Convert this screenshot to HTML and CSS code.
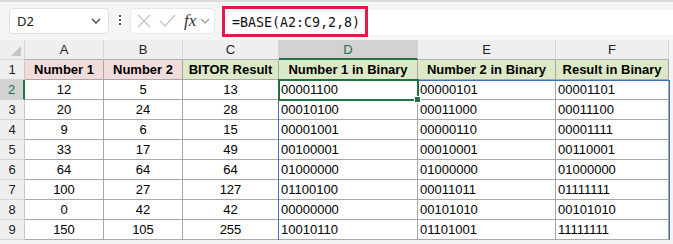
FILE: index.html
```html
<!DOCTYPE html>
<html lang="en">
<head>
    <meta charset="UTF-8">
    <title>BASE - BITOR</title>
    <link rel="stylesheet" href="styles.css">
</head>
<body>

<!-- Barra de fórmulas -->
<div class="toolbar">
    <div class="namebox">
        <span>D2</span>
        <svg class="chev" width="10" height="6" viewBox="0 0 10 6"><path d="M1 1l4 4 4-4" fill="none" stroke="#444" stroke-width="1.3"/></svg>
    </div>
    <div class="dots"><i></i><i></i><i></i></div>
    <div class="fxbox">
        <svg width="14" height="14" viewBox="0 0 14 14"><path d="M1 1l12 12M13 1L1 13" stroke="#c4c4c4" stroke-width="1.3"/></svg>
        <svg width="17" height="14" viewBox="0 0 17 14"><path d="M1 7l5 5L16 1" fill="none" stroke="#c4c4c4" stroke-width="1.3"/></svg>
        <span class="fx">fx</span>
        <svg width="10" height="6" viewBox="0 0 10 6"><path d="M1 1l4 4 4-4" fill="none" stroke="#999" stroke-width="1.2"/></svg>
    </div>
    <div class="formula">
        <span class="highlight"></span>
        <span class="ftext">=BASE(A2:C9,2,8)</span>
    </div>
</div>

<!-- Hoja -->
<div class="sheet">
    <div class="corner"><span class="tri"></span></div>
    <div class="colhead">A</div>
    <div class="colhead">B</div>
    <div class="colhead">C</div>
    <div class="colhead active">D</div>
    <div class="colhead">E</div>
    <div class="colhead">F</div>

    <div class="rowhead">1</div>
    <div class="cell head pink">Number 1</div>
    <div class="cell head pink">Number 2</div>
    <div class="cell head green">BITOR Result</div>
    <div class="cell head green">Number 1 in Binary</div>
    <div class="cell head green">Number 2 in Binary</div>
    <div class="cell head green">Result in Binary</div>

    <div class="rowhead active">2</div>
    <div class="cell num">12</div><div class="cell num">5</div><div class="cell num">13</div>
    <div class="cell bin">00001100</div><div class="cell bin">00000101</div><div class="cell bin">00001101</div>

    <div class="rowhead">3</div>
    <div class="cell num">20</div><div class="cell num">24</div><div class="cell num">28</div>
    <div class="cell bin">00010100</div><div class="cell bin">00011000</div><div class="cell bin">00011100</div>

    <div class="rowhead">4</div>
    <div class="cell num">9</div><div class="cell num">6</div><div class="cell num">15</div>
    <div class="cell bin">00001001</div><div class="cell bin">00000110</div><div class="cell bin">00001111</div>

    <div class="rowhead">5</div>
    <div class="cell num">33</div><div class="cell num">17</div><div class="cell num">49</div>
    <div class="cell bin">00100001</div><div class="cell bin">00010001</div><div class="cell bin">00110001</div>

    <div class="rowhead">6</div>
    <div class="cell num">64</div><div class="cell num">64</div><div class="cell num">64</div>
    <div class="cell bin">01000000</div><div class="cell bin">01000000</div><div class="cell bin">01000000</div>

    <div class="rowhead">7</div>
    <div class="cell num">100</div><div class="cell num">27</div><div class="cell num">127</div>
    <div class="cell bin">01100100</div><div class="cell bin">00011011</div><div class="cell bin">01111111</div>

    <div class="rowhead">8</div>
    <div class="cell num">0</div><div class="cell num">42</div><div class="cell num">42</div>
    <div class="cell bin">00000000</div><div class="cell bin">00101010</div><div class="cell bin">00101010</div>

    <div class="rowhead">9</div>
    <div class="cell num">150</div><div class="cell num">105</div><div class="cell num">255</div>
    <div class="cell bin">10010110</div><div class="cell bin">01101001</div><div class="cell bin">11111111</div>

    <!-- rango desbordado y celda activa -->
    <div class="spill"></div>
    <div class="selected"><span class="handle"></span></div>
</div>

</body>
</html>
```

FILE: styles.css
```css
body {
    margin: 0;
    background: #f3f3f3;
    font-family: 'Liberation Sans', Arial, sans-serif;
    overflow: hidden;
}

/* Barra de fórmulas */
.toolbar {
    height: 40px;
    border-top: 2px solid #dcdcdc;
    box-sizing: border-box;
    display: flex;
    align-items: flex-start;
    padding-top: 6px;
    background: #f5f5f5;
}

.namebox {
    margin-left: 9px;
    width: 100px;
    height: 26px;
    box-sizing: border-box;
    background: #fff;
    border: 1px solid #e0e0e0;
    border-radius: 4px;
    display: flex;
    align-items: center;
    justify-content: space-between;
    padding: 0 7px 0 7px;
    font-family: 'Noto Sans', sans-serif;
    font-size: 13px;
    color: #222;
}

.dots {
    width: 21px;
    display: flex;
    flex-direction: column;
    align-items: center;
    gap: 2px;
    padding-top: 7px;
}

.dots i {
    width: 2px;
    height: 2px;
    background: #555;
}

.fxbox {
    width: 85px;
    height: 26px;
    box-sizing: border-box;
    background: #fff;
    border: 1px solid #e6e6e6;
    border-radius: 4px;
    display: flex;
    align-items: center;
    padding-left: 6px;
    gap: 8px;
}

.fx {
    font-family: 'Liberation Serif', serif;
    font-style: italic;
    font-size: 17px;
    color: #333;
    margin-right: -4px;
}

.formula {
    position: relative;
    flex: 1;
    margin-left: 7px;
    height: 25px;
    margin-top: 2px;
    background: #fff;
    display: flex;
    align-items: center;
    padding-left: 10px;
    font-family: 'DejaVu Sans Mono', monospace;
    font-size: 13.3px;
    color: #111;
}

.highlight {
    position: absolute;
    left: 0;
    top: -4px;
    width: 146px;
    height: 31px;
    box-sizing: border-box;
    border: 3px solid #e3194c;
}

/* Hoja */
.sheet {
    position: relative;
    display: grid;
    grid-template-columns: 25px 79px 79px 96px 139px 138px 113px;
    grid-auto-rows: 20px;
    font-size: 13px;
    color: #000;
}

.corner, .colhead, .rowhead {
    background: #efefef;
    box-sizing: border-box;
    color: #222;
    display: flex;
    align-items: center;
    justify-content: center;
    font-size: 13px;
}

.corner {
    position: relative;
    border-right: 1px solid #d6d6d6;
    border-bottom: 1px solid #d6d6d6;
}

.tri {
    position: absolute;
    right: 3px;
    bottom: 3px;
    width: 0;
    height: 0;
    border-left: 10px solid transparent;
    border-bottom: 10px solid #c6c6c6;
}

.colhead {
    border-right: 1px solid #d6d6d6;
    border-bottom: 1px solid #b0b0b0;
}

.colhead.active {
    background: #d2d2d2;
    color: #217346;
    border-bottom: 2px solid #217346;
}

.rowhead {
    border-bottom: 1px solid #d6d6d6;
    border-right: 1px solid #c8c8c8;
}

.rowhead.active {
    background: #d2d2d2;
    color: #217346;
    border-right: 2px solid #217346;
}

.cell {
    background: #fff;
    box-sizing: border-box;
    border-right: 1px solid #a8a8a8;
    border-bottom: 1px solid #a8a8a8;
    display: flex;
    align-items: center;
    white-space: nowrap;
}

.head {
    justify-content: center;
    font-weight: bold;
}

.pink {
    background: #f2dcdb;
}

.green {
    background: #dce9c6;
}

.num {
    justify-content: center;
}

.bin {
    padding-left: 2px;
}

.spill {
    position: absolute;
    left: 278px;
    top: 40px;
    width: 392px;
    height: 161px;
    box-sizing: border-box;
    border: 1px solid #3b6fc4;
}

.selected {
    position: absolute;
    left: 278px;
    top: 39px;
    width: 141px;
    height: 22px;
    box-sizing: border-box;
    border: 2px solid #217346;
}

.handle {
    position: absolute;
    right: -4px;
    bottom: -4px;
    width: 5px;
    height: 5px;
    background: #217346;
    border: 1px solid #fff;
}
```
